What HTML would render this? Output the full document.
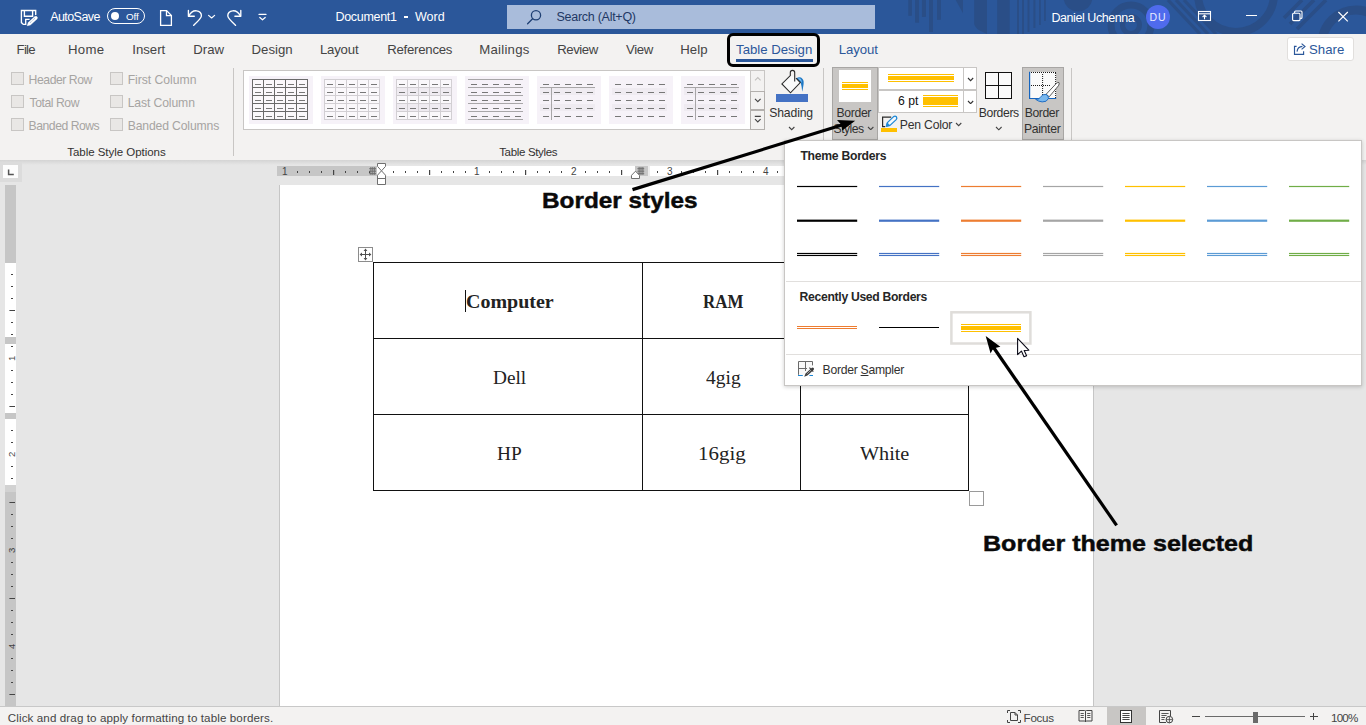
<!DOCTYPE html>
<html>
<head>
<meta charset="utf-8">
<title>Document1 - Word</title>
<style>
*{box-sizing:border-box;margin:0;padding:0}
html,body{width:1366px;height:725px;overflow:hidden;background:#e6e6e6;font-family:"Liberation Sans",sans-serif}
.abs{position:absolute}
.t{position:absolute;white-space:nowrap;line-height:1}
.cb{position:absolute;width:13px;height:13px;border:1px solid #c8c6c4;background:#e9e7e5}
.vsep{position:absolute;width:1px;background:#c8c6c4}
#titlebar{position:absolute;left:0;top:0;width:1366px;height:33.5px;background:#2b579a}
#tabs{position:absolute;left:0;top:33.5px;width:1366px;height:33px;background:#f3f2f1}
#ribbon{position:absolute;left:0;top:66px;width:1366px;height:94px;background:#f3f2f1}
#page{position:absolute;left:278.5px;top:184.5px;width:815.5px;height:522px;background:#fff;border-left:1px solid #c6c6c6;border-right:1px solid #c6c6c6}
#status{position:absolute;left:0;top:706px;width:1366px;height:19px;background:#f3f2f1;border-top:1px solid #c8c8c8}
#menu{position:absolute;left:784px;top:140px;width:578px;height:246px;background:#fff;border:1px solid #c8c6c4;box-shadow:0 1px 4px rgba(0,0,0,.2)}
</style>
</head>
<body>
<div id="page"></div>
<div class="abs" style="left:0;top:160px;width:1366px;height:5px;background:linear-gradient(#d4d4d4,#e6e6e6)"></div>
<div class="abs" style="left:0;top:162px;width:22px;height:20px;background:#dcdcdc"></div>
<div class="abs" style="left:3.4px;top:165px;width:15px;height:13px;background:#fdfdfd"></div>
<svg class="abs" style="left:7px;top:168px" width="8" height="9" viewBox="0 0 8 9"><path d="M1.6 1.6 V6.6 H6.8" fill="none" stroke="#555" stroke-width="1.5"/></svg>
<div class="abs" style="left:277px;top:166px;width:520px;height:10px;background:#fff"></div>
<div class="abs" style="left:277px;top:166px;width:100px;height:10px;background:#c6c6c6"></div>
<div class="abs" style="left:635px;top:166px;width:13px;height:10px;background:#c6c6c6"></div>
<div class="abs" style="left:648px;top:166px;width:2px;height:10px;background:#ececec"></div>
<svg class="abs" style="left:277px;top:162px" width="520" height="24" viewBox="277 162 520 24"><rect x="297.0" y="171" width="1" height="2" fill="#444"/><rect x="309.0" y="171" width="1" height="2" fill="#444"/><rect x="321.0" y="171" width="1" height="2" fill="#444"/><rect x="333.0" y="170" width="1.2" height="5" fill="#444"/><rect x="345.0" y="171" width="1" height="2" fill="#444"/><rect x="357.0" y="171" width="1" height="2" fill="#444"/><rect x="369.0" y="171" width="1" height="2" fill="#444"/><rect x="393.0" y="171" width="1" height="2" fill="#444"/><rect x="405.0" y="171" width="1" height="2" fill="#444"/><rect x="417.0" y="171" width="1" height="2" fill="#444"/><rect x="429.0" y="170" width="1.2" height="5" fill="#444"/><rect x="441.0" y="171" width="1" height="2" fill="#444"/><rect x="453.0" y="171" width="1" height="2" fill="#444"/><rect x="465.0" y="171" width="1" height="2" fill="#444"/><rect x="489.0" y="171" width="1" height="2" fill="#444"/><rect x="501.0" y="171" width="1" height="2" fill="#444"/><rect x="513.0" y="171" width="1" height="2" fill="#444"/><rect x="525.0" y="170" width="1.2" height="5" fill="#444"/><rect x="537.0" y="171" width="1" height="2" fill="#444"/><rect x="549.0" y="171" width="1" height="2" fill="#444"/><rect x="561.0" y="171" width="1" height="2" fill="#444"/><rect x="585.0" y="171" width="1" height="2" fill="#444"/><rect x="597.0" y="171" width="1" height="2" fill="#444"/><rect x="609.0" y="171" width="1" height="2" fill="#444"/><rect x="621.0" y="170" width="1.2" height="5" fill="#444"/><rect x="657.0" y="171" width="1" height="2" fill="#444"/><rect x="681.0" y="171" width="1" height="2" fill="#444"/><rect x="693.0" y="171" width="1" height="2" fill="#444"/><rect x="705.0" y="171" width="1" height="2" fill="#444"/><rect x="717.0" y="170" width="1.2" height="5" fill="#444"/><rect x="729.0" y="171" width="1" height="2" fill="#444"/><rect x="741.0" y="171" width="1" height="2" fill="#444"/><rect x="753.0" y="171" width="1" height="2" fill="#444"/><rect x="777.0" y="171" width="1" height="2" fill="#444"/><rect x="370.4" y="167" width="1" height="7.8" fill="#6e6e6e"/><rect x="372.3" y="167" width="1" height="7.8" fill="#6e6e6e"/><rect x="374.2" y="167" width="1" height="7.8" fill="#6e6e6e"/><rect x="369.2" y="168.2" width="6.8" height="1" fill="#6e6e6e"/><rect x="369.2" y="170.7" width="6.8" height="1" fill="#6e6e6e"/><rect x="369.2" y="173.2" width="6.8" height="1" fill="#6e6e6e"/><rect x="638.6" y="167" width="1" height="7.8" fill="#6e6e6e"/><rect x="640.5" y="167" width="1" height="7.8" fill="#6e6e6e"/><rect x="642.4" y="167" width="1" height="7.8" fill="#6e6e6e"/><rect x="637.4" y="168.2" width="6.8" height="1" fill="#6e6e6e"/><rect x="637.4" y="170.7" width="6.8" height="1" fill="#6e6e6e"/><rect x="637.4" y="173.2" width="6.8" height="1" fill="#6e6e6e"/><path d="M377.5 163.5 H385.5 V166.4 L381.5 170.8 L377.5 166.4 Z" fill="#fff" stroke="#6f6f6f" stroke-width="1"/><path d="M381.5 170.8 L385.5 175.2 V184.5 H377.5 V175.2 Z" fill="#fff" stroke="#6f6f6f" stroke-width="1"/><path d="M377.5 178.5 H385.5" fill="none" stroke="#6f6f6f" stroke-width="1"/><path d="M631.5 178.5 V175.3 L635.5 171.2 L639.5 175.3 V178.5 Z" fill="#fff" stroke="#6f6f6f" stroke-width="1"/></svg>
<div class="t" style="left:281.9px;top:167px;font-size:10px;color:#444;letter-spacing:0.60px;">1</div>
<div class="t" style="left:474.1px;top:167px;font-size:10px;color:#444;letter-spacing:0.60px;">1</div>
<div class="t" style="left:571.0px;top:167px;font-size:10px;color:#444;letter-spacing:-0.40px;">2</div>
<div class="t" style="left:667.0px;top:167px;font-size:10px;color:#444;letter-spacing:-0.40px;">3</div>
<div class="t" style="left:763.0px;top:167px;font-size:10px;color:#444;letter-spacing:-1.20px;">4</div>
<div class="abs" style="left:5px;top:185px;width:11px;height:521px;background:#c6c6c6"></div>
<div class="abs" style="left:5px;top:263px;width:11px;height:74px;background:#fff"></div>
<div class="abs" style="left:5px;top:344px;width:11px;height:69px;background:#fff"></div>
<div class="abs" style="left:5px;top:419px;width:11px;height:66px;background:#fff"></div>
<div class="abs" style="left:5px;top:485px;width:11px;height:7px;background:#d2d2d2"></div>
<svg class="abs" style="left:5px;top:185px" width="11" height="521" viewBox="5 185 11 521"><rect x="11" y="274.0" width="2" height="1" fill="#444"/><rect x="11" y="286.0" width="2" height="1" fill="#444"/><rect x="11" y="298.0" width="2" height="1" fill="#444"/><rect x="9.4" y="310.0" width="5.6" height="1" fill="#444"/><rect x="11" y="322.0" width="2" height="1" fill="#444"/><rect x="11" y="334.0" width="2" height="1" fill="#444"/><rect x="11" y="346.0" width="2" height="1" fill="#444"/><text x="0" y="0" transform="translate(15 358.4) rotate(-90)" font-family="Liberation Sans" font-size="9.6" fill="#444" text-anchor="middle">1</text><rect x="11" y="370.0" width="2" height="1" fill="#444"/><rect x="11" y="382.0" width="2" height="1" fill="#444"/><rect x="11" y="394.0" width="2" height="1" fill="#444"/><rect x="9.4" y="406.0" width="5.6" height="1" fill="#444"/><rect x="11" y="430.0" width="2" height="1" fill="#444"/><rect x="11" y="442.0" width="2" height="1" fill="#444"/><text x="0" y="0" transform="translate(15 454.4) rotate(-90)" font-family="Liberation Sans" font-size="9.6" fill="#444" text-anchor="middle">2</text><rect x="11" y="466.0" width="2" height="1" fill="#444"/><rect x="11" y="478.0" width="2" height="1" fill="#444"/><rect x="9.4" y="502.0" width="5.6" height="1" fill="#444"/><rect x="11" y="514.0" width="2" height="1" fill="#444"/><rect x="11" y="526.0" width="2" height="1" fill="#444"/><rect x="11" y="538.0" width="2" height="1" fill="#444"/><text x="0" y="0" transform="translate(15 550.4) rotate(-90)" font-family="Liberation Sans" font-size="9.6" fill="#444" text-anchor="middle">3</text><rect x="11" y="562.0" width="2" height="1" fill="#444"/><rect x="11" y="574.0" width="2" height="1" fill="#444"/><rect x="11" y="586.0" width="2" height="1" fill="#444"/><rect x="9.4" y="598.0" width="5.6" height="1" fill="#444"/><rect x="11" y="610.0" width="2" height="1" fill="#444"/><rect x="11" y="622.0" width="2" height="1" fill="#444"/><rect x="11" y="634.0" width="2" height="1" fill="#444"/><text x="0" y="0" transform="translate(15 646.4) rotate(-90)" font-family="Liberation Sans" font-size="9.6" fill="#444" text-anchor="middle">4</text><rect x="11" y="658.0" width="2" height="1" fill="#444"/><rect x="11" y="670.0" width="2" height="1" fill="#444"/><rect x="11" y="682.0" width="2" height="1" fill="#444"/><rect x="9.4" y="694.0" width="5.6" height="1" fill="#444"/></svg>
<div class="abs" style="left:373px;top:262px;width:1.3px;height:229px;background:#111"></div>
<div class="abs" style="left:642px;top:262px;width:1.3px;height:229px;background:#111"></div>
<div class="abs" style="left:800px;top:262px;width:1.3px;height:229px;background:#111"></div>
<div class="abs" style="left:968px;top:262px;width:1.3px;height:229px;background:#111"></div>
<div class="abs" style="left:373px;top:262px;width:596px;height:1.3px;background:#111"></div>
<div class="abs" style="left:373px;top:338px;width:596px;height:1.3px;background:#111"></div>
<div class="abs" style="left:373px;top:414px;width:596px;height:1.3px;background:#111"></div>
<div class="abs" style="left:373px;top:490px;width:596px;height:1.3px;background:#111"></div>
<div class="t" style="left:465.5px;top:293px;font-size:18.7px;color:#222;transform:scaleX(1.0691);transform-origin:0 0;font-family:'Liberation Serif',serif;font-weight:bold;">Computer</div>
<div class="t" style="left:702.6px;top:293px;font-size:18.7px;color:#222;transform:scaleX(0.9045);transform-origin:0 0;font-family:'Liberation Serif',serif;font-weight:bold;">RAM</div>
<div class="abs" style="left:465px;top:290px;width:1.2px;height:22px;background:#111"></div>
<div class="t" style="left:492.6px;top:369px;font-size:18.7px;color:#222;transform:scaleX(1.0323);transform-origin:0 0;font-family:'Liberation Serif',serif;">Dell</div>
<div class="t" style="left:705.8px;top:369px;font-size:18.7px;color:#222;transform:scaleX(1.0424);transform-origin:0 0;font-family:'Liberation Serif',serif;">4gig</div>
<div class="t" style="left:497.2px;top:445px;font-size:18.7px;color:#222;transform:scaleX(1.0364);transform-origin:0 0;font-family:'Liberation Serif',serif;">HP</div>
<div class="t" style="left:698.4px;top:445px;font-size:18.7px;color:#222;transform:scaleX(1.1200);transform-origin:0 0;font-family:'Liberation Serif',serif;">16gig</div>
<div class="t" style="left:860.4px;top:445px;font-size:18.7px;color:#222;transform:scaleX(1.0800);transform-origin:0 0;font-family:'Liberation Serif',serif;">White</div>
<svg class="abs" style="left:358px;top:247px" width="16" height="16" viewBox="358 247 16 16">
<rect x="358.5" y="247.5" width="14" height="14" fill="#fff" stroke="#8c8c8c" stroke-width="1"/>
<path d="M365.5 249.5 V259.5 M360.5 254.5 H370.5" stroke="#505050" stroke-width="1" fill="none"/>
<path d="M365.5 248.6 L367.4 251 H363.6 Z M365.5 260.4 L367.4 258 H363.6 Z M359.6 254.5 L362 252.6 V256.4 Z M371.4 254.5 L369 252.6 V256.4 Z" fill="#505050"/></svg>
<div class="abs" style="left:969px;top:491px;width:15px;height:15px;background:#fff;border:1px solid #9a9a9a"></div>
<div id="titlebar"></div>
<svg class="abs" style="left:870px;top:0" width="496" height="33.5" viewBox="870 0 496 33.5">
<g fill="#2a4e87">
<rect x="908.3" y="0" width="3.6" height="15.8"/><rect x="915.1" y="0" width="4" height="22.7"/><rect x="921.9" y="0" width="4" height="16.9"/><rect x="929" y="0" width="4" height="31.9"/><rect x="937" y="0" width="3.9" height="19.8"/>
<path d="M955.7 0 H963 V13.2 Z"/>
<path d="M974.2 0 H987 V34 L984 32.6 Q975 29 974.2 24 Z"/>
<rect x="997.2" y="0" width="12.5" height="34"/>
<rect x="1017" y="0" width="2" height="34"/><rect x="1022" y="0" width="2" height="34"/><rect x="1027.5" y="0" width="2" height="32"/><rect x="1033.4" y="0" width="2" height="28"/><rect x="1039" y="0" width="1.8" height="25"/><rect x="1044" y="0" width="1.8" height="21"/>
<circle cx="1078" cy="-3" r="14.5"/>
</g>
<g fill="none" stroke="#2a4e87">
<circle cx="1131" cy="25" r="20" stroke-width="7"/>
<circle cx="1131" cy="25" r="8.5" stroke-width="5"/>
<path d="M1168 0 L1200 34 M1176 0 L1208 34 M1184 0 L1216 34" stroke-width="3.2"/>
<circle cx="1236" cy="-6" r="38" stroke-width="8"/>
<path d="M1284 18 L1302 0 M1290 24 L1314 0 M1297 29 L1326 0" stroke-width="3.6"/>
<circle cx="1356" cy="44" r="34" stroke-width="9"/>
</g></svg>
<svg class="abs" style="left:19px;top:8px" width="22" height="20" viewBox="19 8 22 20" fill="none" stroke="#fff" stroke-width="1.35" stroke-linejoin="miter" stroke-linecap="butt">
<path d="M35.7 15 V10.5 H21.4 V22.6 L23.3 24.4 H25.7 V19.4 H29.6"/><path d="M24.4 10.5 V16.2 H32.6 V10.5"/>
<path d="M27.2 25.7 L28.3 22.5 L34.9 16.5 Q36 15.7 37 16.8 Q37.9 17.9 37 18.9 L30.4 24.9 Z" fill="#fff" stroke="#fff" stroke-width="0.5" stroke-linejoin="round"/>
<path d="M30.2 22.6 L35.6 17.7" stroke="#2b579a" stroke-width="0.55" stroke-dasharray="1 0.8"/></svg>
<div class="t" style="left:50.2px;top:11px;font-size:12.5px;color:#fff;letter-spacing:-0.57px;">AutoSave</div>
<div class="abs" style="left:107px;top:8px;width:38px;height:16px;border:1.3px solid #fff;border-radius:8px"></div>
<div class="abs" style="left:110.7px;top:12.4px;width:8px;height:8px;border-radius:4px;background:#fff"></div>
<div class="t" style="left:126.0px;top:12px;font-size:9.8px;color:#fff;letter-spacing:-0.10px;">Off</div>
<svg class="abs" style="left:158px;top:8px" width="16" height="20" viewBox="158 8 16 20" fill="none" stroke="#fff" stroke-width="1.3" stroke-linejoin="miter">
<path d="M160.6 10.6 H166.6 L171.4 15.6 V25.3 H160.6 Z"/><path d="M166.5 10.8 V15.7 H171.2"/></svg>
<svg class="abs" style="left:185px;top:8px" width="32" height="20" viewBox="185 8 32 20" fill="none" stroke="#fff" stroke-width="1.35" stroke-linecap="round" stroke-linejoin="round">
<path d="M188.4 10.4 V16.3 H194.3"/><path d="M188.8 16 C190.5 12.5 193.5 10.6 196.5 10.8 C199.8 11 201.6 13.4 201.4 16 C201.2 18.3 199.5 19.8 193.6 25.4"/>
<path d="M208.6 15.4 L211.6 18 L214.6 15.4" stroke-width="1.2"/></svg>
<svg class="abs" style="left:224px;top:8px" width="20" height="20" viewBox="224 8 20 20" fill="none" stroke="#fff" stroke-width="1.35" stroke-linecap="round" stroke-linejoin="round">
<path d="M240.8 10.4 V16.3 H234.9"/><path d="M240.4 16 C238.7 12.5 235.7 10.6 232.7 10.8 C229.4 11 227.6 13.4 227.8 16 C228 18.3 229.7 19.8 235.6 25.4"/></svg>
<svg class="abs" style="left:256px;top:10px" width="12" height="12" viewBox="256 10 12 12" fill="none" stroke="#fff" stroke-width="1.2" stroke-linecap="round" stroke-linejoin="round">
<path d="M259 14.4 H266"/><path d="M259.8 17.5 L262.5 19.8 L265.2 17.5"/></svg>
<div class="t" style="left:335.5px;top:11px;font-size:12.5px;color:#fff;letter-spacing:-0.31px;">Document1</div>
<div class="abs" style="left:403.6px;top:16.4px;width:4.4px;height:1.2px;background:#fff"></div>
<div class="t" style="left:415.0px;top:11px;font-size:12.5px;color:#fff;letter-spacing:0.00px;">Word</div>
<div class="abs" style="left:507px;top:5px;width:368px;height:24px;background:#a9bcdb"></div>
<svg class="abs" style="left:525px;top:8px" width="18" height="18" viewBox="525 8 18 18" fill="none" stroke="#1f3f73" stroke-width="1.3" stroke-linecap="round">
<circle cx="536" cy="15.2" r="4.6"/><path d="M532.6 18.8 L527.6 23.8"/></svg>
<div class="t" style="left:556.5px;top:11px;font-size:12.5px;color:#1f3864;letter-spacing:-0.27px;">Search (Alt+Q)</div>
<div class="t" style="left:1051.4px;top:12px;font-size:12.5px;color:#fff;letter-spacing:-0.43px;">Daniel Uchenna</div>
<div class="abs" style="left:1146px;top:5px;width:24px;height:24px;border-radius:12px;background:#4f6bed"></div>
<div class="t" style="left:1149.6px;top:12px;font-size:10.5px;color:#e8ecff;letter-spacing:0.80px;">DU</div>
<svg class="abs" style="left:1196px;top:9px" width="18" height="14" viewBox="1196 9 18 14" fill="none" stroke="#fff" stroke-width="1.1" stroke-linejoin="miter">
<rect x="1198.5" y="11.5" width="12" height="9"/><path d="M1198.5 13.8 H1210.5"/><path d="M1204.5 19.3 V15.4 M1202.6 17 L1204.5 15.2 L1206.4 17"/></svg>
<div class="abs" style="left:1246px;top:15px;width:10.5px;height:1.2px;background:#fff"></div>
<svg class="abs" style="left:1290px;top:9px" width="14" height="14" viewBox="1290 9 14 14" fill="none" stroke="#fff" stroke-width="1.1">
<rect x="1292.6" y="13.2" width="7.4" height="7.4" rx="1"/><path d="M1294.6 13 V12 Q1294.6 11 1295.6 11 H1301 Q1302 11 1302 12 V17.4 Q1302 18.4 1301 18.4 H1300.2"/></svg>
<svg class="abs" style="left:1336px;top:10px" width="14" height="14" viewBox="1336 10 14 14" fill="none" stroke="#fff" stroke-width="1.15">
<path d="M1338.4 12 L1347.8 21.4 M1347.8 12 L1338.4 21.4"/></svg>
<div id="tabs"></div>
<div id="ribbon"></div>
<div class="t" style="left:16.6px;top:43px;font-size:13.2px;color:#444;letter-spacing:-0.73px;">File</div>
<div class="t" style="left:68.0px;top:43px;font-size:13.2px;color:#444;letter-spacing:0.27px;">Home</div>
<div class="t" style="left:132.3px;top:43px;font-size:13.2px;color:#444;letter-spacing:-0.02px;">Insert</div>
<div class="t" style="left:193.3px;top:43px;font-size:13.2px;color:#444;letter-spacing:0.00px;">Draw</div>
<div class="t" style="left:251.5px;top:43px;font-size:13.2px;color:#444;letter-spacing:0.02px;">Design</div>
<div class="t" style="left:319.9px;top:43px;font-size:13.2px;color:#444;letter-spacing:-0.18px;">Layout</div>
<div class="t" style="left:387.2px;top:43px;font-size:13.2px;color:#444;letter-spacing:-0.24px;">References</div>
<div class="t" style="left:479.2px;top:43px;font-size:13.2px;color:#444;letter-spacing:0.26px;">Mailings</div>
<div class="t" style="left:557.3px;top:43px;font-size:13.2px;color:#444;letter-spacing:-0.46px;">Review</div>
<div class="t" style="left:626.0px;top:43px;font-size:13.2px;color:#444;letter-spacing:-0.33px;">View</div>
<div class="t" style="left:680.2px;top:43px;font-size:13.2px;color:#444;letter-spacing:0.13px;">Help</div>
<div class="t" style="left:736.1px;top:43px;font-size:13.2px;color:#2b579a;letter-spacing:-0.01px;">Table Design</div>
<div class="abs" style="left:736px;top:59px;width:77px;height:3px;background:#2b579a"></div>
<div class="t" style="left:838.8px;top:43px;font-size:13.2px;color:#2b579a;letter-spacing:-0.12px;">Layout</div>
<div class="abs" style="left:727px;top:33px;width:93px;height:34px;border:3px solid #000;border-radius:6px"></div>
<div class="abs" style="left:1287px;top:37px;width:66.5px;height:23.5px;background:#fff;border:1px solid #e1dfdd;border-radius:3px"></div>
<svg class="abs" style="left:1292px;top:41px" width="16" height="16" viewBox="1292 41 16 16" fill="none" stroke="#2b579a" stroke-width="1.15" stroke-linejoin="miter">
<path d="M1296.6 46.4 H1294.5 V54.4 H1303.6 V51.2"/><path d="M1297 51.6 C1297.4 48.6 1299.2 46.6 1302.4 46.4 M1301.6 43.6 L1305 46.5 L1301.6 49.4"/></svg>
<div class="t" style="left:1309.0px;top:43px;font-size:13.2px;color:#2b579a;letter-spacing:0.05px;">Share</div>
<div class="cb" style="left:11px;top:72px"></div>
<div class="cb" style="left:110px;top:72px"></div>
<div class="t" style="left:28.6px;top:74px;font-size:12.2px;color:#a6a4a2;letter-spacing:-0.44px;">Header Row</div>
<div class="t" style="left:127.7px;top:74px;font-size:12.2px;color:#a6a4a2;letter-spacing:-0.03px;">First Column</div>
<div class="cb" style="left:11px;top:95px"></div>
<div class="cb" style="left:110px;top:95px"></div>
<div class="t" style="left:29.6px;top:97px;font-size:12.2px;color:#a6a4a2;letter-spacing:-0.45px;">Total Row</div>
<div class="t" style="left:127.7px;top:97px;font-size:12.2px;color:#a6a4a2;letter-spacing:-0.12px;">Last Column</div>
<div class="cb" style="left:11px;top:118px"></div>
<div class="cb" style="left:110px;top:118px"></div>
<div class="t" style="left:28.6px;top:120px;font-size:12.2px;color:#a6a4a2;letter-spacing:-0.48px;">Banded Rows</div>
<div class="t" style="left:127.7px;top:120px;font-size:12.2px;color:#a6a4a2;letter-spacing:-0.15px;">Banded Columns</div>
<div class="t" style="left:67.3px;top:147px;font-size:11.5px;color:#323130;letter-spacing:-0.04px;">Table Style Options</div>
<div class="vsep" style="left:233px;top:68px;height:88px"></div>
<div class="abs" style="left:243px;top:70px;width:522px;height:60px;background:#fff;border:1px solid #c8c6c4"></div>
<svg class="abs" style="left:249px;top:76px" width="64" height="48" viewBox="0 0 64 48" shape-rendering="crispEdges"><rect width="64" height="48" fill="#f6f2f8"/><rect x="3" y="3" width="56" height="41" fill="#faf8fb"/><rect x="3" y="3" width="1" height="41" fill="#6a6a6a"/><rect x="3" y="3" width="56" height="1" fill="#6a6a6a"/><rect x="14" y="3" width="1" height="41" fill="#6a6a6a"/><rect x="3" y="11" width="56" height="1" fill="#6a6a6a"/><rect x="25" y="3" width="1" height="41" fill="#6a6a6a"/><rect x="3" y="19" width="56" height="1" fill="#6a6a6a"/><rect x="36" y="3" width="1" height="41" fill="#6a6a6a"/><rect x="3" y="27" width="56" height="1" fill="#6a6a6a"/><rect x="47" y="3" width="1" height="41" fill="#6a6a6a"/><rect x="3" y="35" width="56" height="1" fill="#6a6a6a"/><rect x="58" y="3" width="1" height="41" fill="#6a6a6a"/><rect x="3" y="43" width="56" height="1" fill="#6a6a6a"/><rect x="6" y="8" width="6" height="1" fill="#777"/><rect x="17" y="8" width="6" height="1" fill="#777"/><rect x="28" y="8" width="6" height="1" fill="#777"/><rect x="39" y="8" width="6" height="1" fill="#777"/><rect x="50" y="8" width="6" height="1" fill="#777"/><rect x="6" y="16" width="6" height="1" fill="#777"/><rect x="17" y="16" width="6" height="1" fill="#777"/><rect x="28" y="16" width="6" height="1" fill="#777"/><rect x="39" y="16" width="6" height="1" fill="#777"/><rect x="50" y="16" width="6" height="1" fill="#777"/><rect x="6" y="24" width="6" height="1" fill="#777"/><rect x="17" y="24" width="6" height="1" fill="#777"/><rect x="28" y="24" width="6" height="1" fill="#777"/><rect x="39" y="24" width="6" height="1" fill="#777"/><rect x="50" y="24" width="6" height="1" fill="#777"/><rect x="6" y="32" width="6" height="1" fill="#777"/><rect x="17" y="32" width="6" height="1" fill="#777"/><rect x="28" y="32" width="6" height="1" fill="#777"/><rect x="39" y="32" width="6" height="1" fill="#777"/><rect x="50" y="32" width="6" height="1" fill="#777"/><rect x="6" y="40" width="6" height="1" fill="#777"/><rect x="17" y="40" width="6" height="1" fill="#777"/><rect x="28" y="40" width="6" height="1" fill="#777"/><rect x="39" y="40" width="6" height="1" fill="#777"/><rect x="50" y="40" width="6" height="1" fill="#777"/></svg>
<svg class="abs" style="left:321px;top:76px" width="64" height="48" viewBox="0 0 64 48" shape-rendering="crispEdges"><rect width="64" height="48" fill="#f6f2f8"/><rect x="3" y="3" width="56" height="41" fill="#faf8fb"/><rect x="3" y="3" width="1" height="41" fill="#d2cfd3"/><rect x="3" y="3" width="56" height="1" fill="#d2cfd3"/><rect x="14" y="3" width="1" height="41" fill="#d2cfd3"/><rect x="3" y="11" width="56" height="1" fill="#d2cfd3"/><rect x="25" y="3" width="1" height="41" fill="#d2cfd3"/><rect x="3" y="19" width="56" height="1" fill="#d2cfd3"/><rect x="36" y="3" width="1" height="41" fill="#d2cfd3"/><rect x="3" y="27" width="56" height="1" fill="#d2cfd3"/><rect x="47" y="3" width="1" height="41" fill="#d2cfd3"/><rect x="3" y="35" width="56" height="1" fill="#d2cfd3"/><rect x="58" y="3" width="1" height="41" fill="#d2cfd3"/><rect x="3" y="43" width="56" height="1" fill="#d2cfd3"/><rect x="6" y="8" width="6" height="1" fill="#777"/><rect x="17" y="8" width="6" height="1" fill="#777"/><rect x="28" y="8" width="6" height="1" fill="#777"/><rect x="39" y="8" width="6" height="1" fill="#777"/><rect x="50" y="8" width="6" height="1" fill="#777"/><rect x="6" y="16" width="6" height="1" fill="#777"/><rect x="17" y="16" width="6" height="1" fill="#777"/><rect x="28" y="16" width="6" height="1" fill="#777"/><rect x="39" y="16" width="6" height="1" fill="#777"/><rect x="50" y="16" width="6" height="1" fill="#777"/><rect x="6" y="24" width="6" height="1" fill="#777"/><rect x="17" y="24" width="6" height="1" fill="#777"/><rect x="28" y="24" width="6" height="1" fill="#777"/><rect x="39" y="24" width="6" height="1" fill="#777"/><rect x="50" y="24" width="6" height="1" fill="#777"/><rect x="6" y="32" width="6" height="1" fill="#777"/><rect x="17" y="32" width="6" height="1" fill="#777"/><rect x="28" y="32" width="6" height="1" fill="#777"/><rect x="39" y="32" width="6" height="1" fill="#777"/><rect x="50" y="32" width="6" height="1" fill="#777"/><rect x="6" y="40" width="6" height="1" fill="#777"/><rect x="17" y="40" width="6" height="1" fill="#777"/><rect x="28" y="40" width="6" height="1" fill="#777"/><rect x="39" y="40" width="6" height="1" fill="#777"/><rect x="50" y="40" width="6" height="1" fill="#777"/></svg>
<svg class="abs" style="left:393px;top:76px" width="64" height="48" viewBox="0 0 64 48" shape-rendering="crispEdges"><rect width="64" height="48" fill="#f6f2f8"/><rect x="3" y="3" width="56" height="41" fill="#faf8fb"/><rect x="3" y="11" width="56" height="9" fill="#efebf1"/><rect x="3" y="27" width="56" height="9" fill="#efebf1"/><rect x="3" y="3" width="1" height="41" fill="#d2cfd3"/><rect x="3" y="3" width="56" height="1" fill="#d2cfd3"/><rect x="14" y="3" width="1" height="41" fill="#d2cfd3"/><rect x="3" y="11" width="56" height="1" fill="#d2cfd3"/><rect x="25" y="3" width="1" height="41" fill="#d2cfd3"/><rect x="3" y="19" width="56" height="1" fill="#d2cfd3"/><rect x="36" y="3" width="1" height="41" fill="#d2cfd3"/><rect x="3" y="27" width="56" height="1" fill="#d2cfd3"/><rect x="47" y="3" width="1" height="41" fill="#d2cfd3"/><rect x="3" y="35" width="56" height="1" fill="#d2cfd3"/><rect x="58" y="3" width="1" height="41" fill="#d2cfd3"/><rect x="3" y="43" width="56" height="1" fill="#d2cfd3"/><rect x="6" y="8" width="6" height="1" fill="#777"/><rect x="17" y="8" width="6" height="1" fill="#777"/><rect x="28" y="8" width="6" height="1" fill="#777"/><rect x="39" y="8" width="6" height="1" fill="#777"/><rect x="50" y="8" width="6" height="1" fill="#777"/><rect x="6" y="16" width="6" height="1" fill="#777"/><rect x="17" y="16" width="6" height="1" fill="#777"/><rect x="28" y="16" width="6" height="1" fill="#777"/><rect x="39" y="16" width="6" height="1" fill="#777"/><rect x="50" y="16" width="6" height="1" fill="#777"/><rect x="6" y="24" width="6" height="1" fill="#777"/><rect x="17" y="24" width="6" height="1" fill="#777"/><rect x="28" y="24" width="6" height="1" fill="#777"/><rect x="39" y="24" width="6" height="1" fill="#777"/><rect x="50" y="24" width="6" height="1" fill="#777"/><rect x="6" y="32" width="6" height="1" fill="#777"/><rect x="17" y="32" width="6" height="1" fill="#777"/><rect x="28" y="32" width="6" height="1" fill="#777"/><rect x="39" y="32" width="6" height="1" fill="#777"/><rect x="50" y="32" width="6" height="1" fill="#777"/><rect x="6" y="40" width="6" height="1" fill="#777"/><rect x="17" y="40" width="6" height="1" fill="#777"/><rect x="28" y="40" width="6" height="1" fill="#777"/><rect x="39" y="40" width="6" height="1" fill="#777"/><rect x="50" y="40" width="6" height="1" fill="#777"/></svg>
<svg class="abs" style="left:465px;top:76px" width="64" height="48" viewBox="0 0 64 48" shape-rendering="crispEdges"><rect width="64" height="48" fill="#f6f2f8"/><rect x="3" y="3" width="55" height="1" fill="#a8a6a8"/><rect x="3" y="11" width="55" height="1" fill="#a8a6a8"/><rect x="3" y="19" width="55" height="1" fill="#a8a6a8"/><rect x="3" y="27" width="55" height="1" fill="#a8a6a8"/><rect x="3" y="35" width="55" height="1" fill="#a8a6a8"/><rect x="3" y="43" width="55" height="1" fill="#a8a6a8"/><rect x="6" y="8" width="6" height="1" fill="#777"/><rect x="17" y="8" width="6" height="1" fill="#777"/><rect x="28" y="8" width="6" height="1" fill="#777"/><rect x="39" y="8" width="6" height="1" fill="#777"/><rect x="50" y="8" width="6" height="1" fill="#777"/><rect x="6" y="16" width="6" height="1" fill="#777"/><rect x="17" y="16" width="6" height="1" fill="#777"/><rect x="28" y="16" width="6" height="1" fill="#777"/><rect x="39" y="16" width="6" height="1" fill="#777"/><rect x="50" y="16" width="6" height="1" fill="#777"/><rect x="6" y="24" width="6" height="1" fill="#777"/><rect x="17" y="24" width="6" height="1" fill="#777"/><rect x="28" y="24" width="6" height="1" fill="#777"/><rect x="39" y="24" width="6" height="1" fill="#777"/><rect x="50" y="24" width="6" height="1" fill="#777"/><rect x="6" y="32" width="6" height="1" fill="#777"/><rect x="17" y="32" width="6" height="1" fill="#777"/><rect x="28" y="32" width="6" height="1" fill="#777"/><rect x="39" y="32" width="6" height="1" fill="#777"/><rect x="50" y="32" width="6" height="1" fill="#777"/><rect x="6" y="40" width="6" height="1" fill="#777"/><rect x="17" y="40" width="6" height="1" fill="#777"/><rect x="28" y="40" width="6" height="1" fill="#777"/><rect x="39" y="40" width="6" height="1" fill="#777"/><rect x="50" y="40" width="6" height="1" fill="#777"/></svg>
<svg class="abs" style="left:537px;top:76px" width="64" height="48" viewBox="0 0 64 48" shape-rendering="crispEdges"><rect width="64" height="48" fill="#f6f2f8"/><rect x="3" y="12" width="55" height="7" fill="#efebf1"/><rect x="3" y="28" width="55" height="7" fill="#efebf1"/><rect x="3" y="11" width="55" height="1" fill="#a8a6a8"/><rect x="14" y="11" width="1" height="33" fill="#a8a6a8"/><rect x="6" y="8" width="6" height="1" fill="#777"/><rect x="17" y="8" width="6" height="1" fill="#777"/><rect x="28" y="8" width="6" height="1" fill="#777"/><rect x="39" y="8" width="6" height="1" fill="#777"/><rect x="50" y="8" width="6" height="1" fill="#777"/><rect x="6" y="16" width="6" height="1" fill="#777"/><rect x="17" y="16" width="6" height="1" fill="#777"/><rect x="28" y="16" width="6" height="1" fill="#777"/><rect x="39" y="16" width="6" height="1" fill="#777"/><rect x="50" y="16" width="6" height="1" fill="#777"/><rect x="6" y="24" width="6" height="1" fill="#777"/><rect x="17" y="24" width="6" height="1" fill="#777"/><rect x="28" y="24" width="6" height="1" fill="#777"/><rect x="39" y="24" width="6" height="1" fill="#777"/><rect x="50" y="24" width="6" height="1" fill="#777"/><rect x="6" y="32" width="6" height="1" fill="#777"/><rect x="17" y="32" width="6" height="1" fill="#777"/><rect x="28" y="32" width="6" height="1" fill="#777"/><rect x="39" y="32" width="6" height="1" fill="#777"/><rect x="50" y="32" width="6" height="1" fill="#777"/><rect x="6" y="40" width="6" height="1" fill="#777"/><rect x="17" y="40" width="6" height="1" fill="#777"/><rect x="28" y="40" width="6" height="1" fill="#777"/><rect x="39" y="40" width="6" height="1" fill="#777"/><rect x="50" y="40" width="6" height="1" fill="#777"/></svg>
<svg class="abs" style="left:609px;top:76px" width="64" height="48" viewBox="0 0 64 48" shape-rendering="crispEdges"><rect width="64" height="48" fill="#f6f2f8"/><rect x="3" y="12" width="55" height="7" fill="#efebf1"/><rect x="3" y="28" width="55" height="7" fill="#efebf1"/><rect x="6" y="8" width="6" height="1" fill="#777"/><rect x="17" y="8" width="6" height="1" fill="#777"/><rect x="28" y="8" width="6" height="1" fill="#777"/><rect x="39" y="8" width="6" height="1" fill="#777"/><rect x="50" y="8" width="6" height="1" fill="#777"/><rect x="6" y="16" width="6" height="1" fill="#777"/><rect x="17" y="16" width="6" height="1" fill="#777"/><rect x="28" y="16" width="6" height="1" fill="#777"/><rect x="39" y="16" width="6" height="1" fill="#777"/><rect x="50" y="16" width="6" height="1" fill="#777"/><rect x="6" y="24" width="6" height="1" fill="#777"/><rect x="17" y="24" width="6" height="1" fill="#777"/><rect x="28" y="24" width="6" height="1" fill="#777"/><rect x="39" y="24" width="6" height="1" fill="#777"/><rect x="50" y="24" width="6" height="1" fill="#777"/><rect x="6" y="32" width="6" height="1" fill="#777"/><rect x="17" y="32" width="6" height="1" fill="#777"/><rect x="28" y="32" width="6" height="1" fill="#777"/><rect x="39" y="32" width="6" height="1" fill="#777"/><rect x="50" y="32" width="6" height="1" fill="#777"/><rect x="6" y="40" width="6" height="1" fill="#777"/><rect x="17" y="40" width="6" height="1" fill="#777"/><rect x="28" y="40" width="6" height="1" fill="#777"/><rect x="39" y="40" width="6" height="1" fill="#777"/><rect x="50" y="40" width="6" height="1" fill="#777"/></svg>
<svg class="abs" style="left:681px;top:76px" width="64" height="48" viewBox="0 0 64 48" shape-rendering="crispEdges"><rect width="64" height="48" fill="#f6f2f8"/><rect x="3" y="12" width="55" height="7" fill="#efebf1"/><rect x="3" y="28" width="55" height="7" fill="#efebf1"/><rect x="3" y="11" width="55" height="1" fill="#a8a6a8"/><rect x="14" y="11" width="1" height="33" fill="#a8a6a8"/><rect x="6" y="8" width="6" height="1" fill="#777"/><rect x="17" y="8" width="6" height="1" fill="#777"/><rect x="28" y="8" width="6" height="1" fill="#777"/><rect x="39" y="8" width="6" height="1" fill="#777"/><rect x="50" y="8" width="6" height="1" fill="#777"/><rect x="6" y="16" width="6" height="1" fill="#777"/><rect x="17" y="16" width="6" height="1" fill="#777"/><rect x="28" y="16" width="6" height="1" fill="#777"/><rect x="39" y="16" width="6" height="1" fill="#777"/><rect x="50" y="16" width="6" height="1" fill="#777"/><rect x="6" y="24" width="6" height="1" fill="#777"/><rect x="17" y="24" width="6" height="1" fill="#777"/><rect x="28" y="24" width="6" height="1" fill="#777"/><rect x="39" y="24" width="6" height="1" fill="#777"/><rect x="50" y="24" width="6" height="1" fill="#777"/><rect x="6" y="32" width="6" height="1" fill="#777"/><rect x="17" y="32" width="6" height="1" fill="#777"/><rect x="28" y="32" width="6" height="1" fill="#777"/><rect x="39" y="32" width="6" height="1" fill="#777"/><rect x="50" y="32" width="6" height="1" fill="#777"/><rect x="6" y="40" width="6" height="1" fill="#777"/><rect x="17" y="40" width="6" height="1" fill="#777"/><rect x="28" y="40" width="6" height="1" fill="#777"/><rect x="39" y="40" width="6" height="1" fill="#777"/><rect x="50" y="40" width="6" height="1" fill="#777"/></svg>
<div class="abs" style="left:750px;top:71px;width:14px;height:20px;background:#f3f2f1;border-left:1px solid #c8c6c4"></div>
<div class="abs" style="left:750px;top:91px;width:15px;height:19px;background:#f3f2f1;border:1px solid #b3b0ad"></div>
<div class="abs" style="left:750px;top:110px;width:15px;height:20px;background:#f3f2f1;border:1px solid #b3b0ad"></div>
<svg class="abs" style="left:753px;top:75px" width="10" height="8" viewBox="0 0 10 8" fill="none" stroke="#c2c0be" stroke-width="1.1"><path d="M2 5.4 L4.8 2.6 L7.6 5.4"/></svg>
<svg class="abs" style="left:753px;top:96px" width="10" height="8" viewBox="0 0 10 8" fill="none" stroke="#444" stroke-width="1.1"><path d="M2 2.8 L4.8 5.6 L7.6 2.8"/></svg>
<svg class="abs" style="left:753px;top:113px" width="10" height="12" viewBox="0 0 10 12" fill="none" stroke="#444" stroke-width="1.1"><path d="M1.8 3.4 H7.8 M2 6.2 L4.8 9 L7.6 6.2"/></svg>
<div class="t" style="left:499.2px;top:147px;font-size:11.5px;color:#323130;letter-spacing:-0.33px;">Table Styles</div>
<svg class="abs" style="left:774px;top:68px" width="36" height="36" viewBox="774 68 36 36">
<path d="M781.9 83.9 L790.4 75.5 L795 77.4 L800.3 82.6 L790.5 92.8 Z" fill="#fafafa"/>
<path d="M796.4 78.6 Q798.6 76.4 801 77.6 Q804.2 79.6 803.6 84 Q803.2 87.6 802.2 91.8 Q801.8 86.6 800.8 83 Z" fill="#1e79c6"/>
<path d="M797.8 78.6 Q799.6 77.8 800.8 79 Q802 80.4 801.8 83 Q800.6 80.6 797.8 78.6 Z" fill="#7fbdf0"/>
<path d="M794.7 81.6 V72.6 Q794.7 70.4 792.5 70.4 Q790.3 70.4 790.3 72.6 V75.6 L781.9 83.9 L790.5 92.8 L800.3 82.6 L796 78.2" fill="none" stroke="#2b2b2b" stroke-width="1.1" stroke-linejoin="miter"/>
<rect x="776" y="94" width="32" height="8" fill="#4472c4"/></svg>
<div class="t" style="left:769.2px;top:107px;font-size:12.2px;color:#323130;letter-spacing:-0.13px;">Shading</div>
<svg class="abs" style="left:787.7px;top:126.0px" width="7.4" height="4.7" viewBox="-1 -1 7.4 4.7" fill="none" stroke="#444" stroke-width="1.1" stroke-linecap="butt" stroke-linejoin="miter"><path d="M0 0 L2.70 2.70 L5.40 0"/></svg>
<div class="vsep" style="left:823px;top:68px;height:89px"></div>
<div class="abs" style="left:832px;top:67px;width:46px;height:73px;background:#c8c6c4;border:1px solid #a8a6a4"></div>
<div class="abs" style="left:839px;top:70px;width:32px;height:32px;background:#fff"></div>
<div class="abs" style="left:842px;top:82px;width:26px;height:1px;background:#ffc000"></div>
<div class="abs" style="left:842px;top:84px;width:26px;height:4px;background:#ffc000"></div>
<div class="abs" style="left:842px;top:89px;width:26px;height:1px;background:#ffc000"></div>
<div class="t" style="left:836.6px;top:107px;font-size:12.2px;color:#323130;letter-spacing:-0.36px;">Border</div>
<div class="t" style="left:833.6px;top:123px;font-size:12.2px;color:#323130;letter-spacing:-0.56px;">Styles</div>
<svg class="abs" style="left:867.0px;top:125.6px" width="7.4" height="4.7" viewBox="-1 -1 7.4 4.7" fill="none" stroke="#444" stroke-width="1.1" stroke-linecap="butt" stroke-linejoin="miter"><path d="M0 0 L2.70 2.70 L5.40 0"/></svg>
<div class="abs" style="left:878px;top:67px;width:99px;height:23px;background:#fff;border:1px solid #c8c6c4"></div>
<div class="abs" style="left:878px;top:90px;width:99px;height:23px;background:#fff;border:1px solid #c8c6c4"></div>
<div class="abs" style="left:963px;top:68px;width:1px;height:21px;background:#c8c6c4"></div>
<div class="abs" style="left:963px;top:91px;width:1px;height:21px;background:#c8c6c4"></div>
<div class="abs" style="left:888px;top:74px;width:66px;height:1px;background:#ffc000"></div>
<div class="abs" style="left:888px;top:76px;width:66px;height:4px;background:#ffc000"></div>
<div class="abs" style="left:888px;top:81px;width:66px;height:1px;background:#ffc000"></div>
<svg class="abs" style="left:966.6px;top:77.0px" width="7.2" height="4.7" viewBox="-1 -1 7.2 4.7" fill="none" stroke="#333" stroke-width="1.1" stroke-linecap="butt" stroke-linejoin="miter"><path d="M0 0 L2.60 2.70 L5.20 0"/></svg>
<svg class="abs" style="left:966.6px;top:99.8px" width="7.2" height="4.7" viewBox="-1 -1 7.2 4.7" fill="none" stroke="#333" stroke-width="1.1" stroke-linecap="butt" stroke-linejoin="miter"><path d="M0 0 L2.60 2.70 L5.20 0"/></svg>
<div class="t" style="left:898.1px;top:95px;font-size:12.2px;color:#111;letter-spacing:-0.03px;">6 pt</div>
<div class="abs" style="left:923px;top:95px;width:35px;height:1px;background:#ffc000"></div>
<div class="abs" style="left:923px;top:97px;width:35px;height:7.6px;background:#ffc000"></div>
<div class="abs" style="left:923px;top:106px;width:35px;height:1px;background:#ffc000"></div>
<svg class="abs" style="left:880px;top:114px" width="20" height="20" viewBox="880 114 20 20">
<path d="M891.2 117.2 H882.6 V126.6 H885.2" fill="none" stroke="#2b2b2b" stroke-width="1.2"/>
<path d="M886.4 126.2 L887.4 122.6 L893.6 116.6 Q895.2 115.6 896.4 116.8 Q897.4 118.2 896.2 119.6 L890 125.4 Z" fill="#f4f8fc" stroke="#1e88d6" stroke-width="1.3" stroke-linejoin="round"/>
<path d="M886.2 126.6 L887.2 122.8 L890 125.6 Z" fill="#1e88d6" stroke="#1e88d6" stroke-width="0.6"/>
<rect x="881" y="128" width="16" height="4" fill="#ffc000"/></svg>
<div class="t" style="left:899.8px;top:119px;font-size:12.2px;color:#323130;letter-spacing:-0.20px;">Pen Color</div>
<svg class="abs" style="left:955.0px;top:122.2px" width="7.3" height="4.7" viewBox="-1 -1 7.3 4.7" fill="none" stroke="#444" stroke-width="1.1" stroke-linecap="butt" stroke-linejoin="miter"><path d="M0 0 L2.65 2.70 L5.30 0"/></svg>
<div class="abs" style="left:985px;top:72px;width:27px;height:27px;background:#fafafa;border:1px solid #111"></div>
<div class="abs" style="left:998px;top:72px;width:1px;height:27px;background:#111"></div>
<div class="abs" style="left:985px;top:85px;width:27px;height:1px;background:#111"></div>
<div class="t" style="left:978.8px;top:107px;font-size:12.2px;color:#323130;letter-spacing:-0.38px;">Borders</div>
<svg class="abs" style="left:994.6px;top:126.0px" width="7.6" height="4.8" viewBox="-1 -1 7.6 4.8" fill="none" stroke="#444" stroke-width="1.1" stroke-linecap="butt" stroke-linejoin="miter"><path d="M0 0 L2.80 2.80 L5.60 0"/></svg>
<div class="abs" style="left:1022px;top:67px;width:42px;height:73px;background:#c8c6c4;border:1px solid #a8a6a4"></div>
<svg class="abs" style="left:1027px;top:69px" width="34" height="36" viewBox="1027 69 34 36">
<rect x="1030" y="72" width="26" height="26.4" fill="#fafafa"/>
<path d="M1031 72.5 H1056 M1055.6 73 V98 M1042.6 74 V96 M1031 85.5 H1050" fill="none" stroke="#1a1a1a" stroke-width="1" stroke-dasharray="1 1"/>
<path d="M1029.6 71.8 V98.5 H1056.2" fill="none" stroke="#1565c0" stroke-width="1.2"/>
<path d="M1046.2 94.2 L1056.2 83.6 Q1058.2 81.8 1059 82.6 Q1059.7 83.6 1058.4 85.8 L1049.2 96.8 Z" fill="#fff" stroke="#4a4a4a" stroke-width="0.9"/>
<path d="M1035.6 99.3 Q1039.2 99.6 1040.6 97 Q1042.6 93.8 1046 94.4 Q1049 95.6 1048.4 98.6 Q1046.8 102.2 1042.2 101.9 Q1038.4 101.6 1035.6 99.3 Z" fill="#7ab8ee" stroke="#1565c0" stroke-width="0.9"/></svg>
<div class="t" style="left:1024.7px;top:107px;font-size:12.2px;color:#323130;letter-spacing:-0.40px;">Border</div>
<div class="t" style="left:1023.9px;top:123px;font-size:12.2px;color:#323130;letter-spacing:-0.30px;">Painter</div>
<div class="vsep" style="left:1071px;top:68px;height:89px"></div>
<div id="status"></div>
<div class="t" style="left:7.8px;top:712px;font-size:11.6px;color:#444;letter-spacing:0.11px;">Click and drag to apply formatting to table borders.</div>
<svg class="abs" style="left:1005px;top:708px" width="18" height="17" viewBox="1005 708 18 17" fill="none" stroke="#444" stroke-width="1">
<path d="M1007.5 713 V710.5 H1010 M1018 710.5 H1020.5 V713 M1020.5 720 V722.5 H1018 M1010 722.5 H1007.5 V720"/>
<path d="M1010.5 712.5 H1015 L1017.5 715 V720.5 H1010.5 Z M1015 712.5 V715 H1017.5"/></svg>
<div class="t" style="left:1023.6px;top:712px;font-size:11.6px;color:#444;letter-spacing:-0.30px;">Focus</div>
<svg class="abs" style="left:1077px;top:708px" width="18" height="17" viewBox="1077 708 18 17" fill="none" stroke="#444" stroke-width="1">
<path d="M1085.5 711.5 V722 M1079 710.5 H1084.5 Q1085.5 710.5 1085.5 711.5 Q1085.5 710.5 1086.5 710.5 H1092 V721 H1086.5 Q1085.5 721 1085.5 722 Q1085.5 721 1084.5 721 H1079 Z"/>
<path d="M1080.6 713.5 H1083.8 M1080.6 715.5 H1083.8 M1080.6 717.5 H1083.8 M1087.2 713.5 H1090.4 M1087.2 715.5 H1090.4 M1087.2 717.5 H1090.4" stroke-width="0.9"/></svg>
<div class="abs" style="left:1106.5px;top:707px;width:39.5px;height:18px;background:#c8c6c4"></div>
<svg class="abs" style="left:1118px;top:708px" width="16" height="17" viewBox="1118 708 16 17" fill="none" stroke="#333" stroke-width="1">
<rect x="1120.5" y="710.5" width="11" height="12" fill="#fff"/>
<path d="M1122.4 713.5 H1129.6 M1122.4 715.5 H1129.6 M1122.4 717.5 H1129.6 M1122.4 719.5 H1129.6" stroke-width="0.9"/></svg>
<svg class="abs" style="left:1157px;top:708px" width="18" height="17" viewBox="1157 708 18 17" fill="none" stroke="#444" stroke-width="1">
<path d="M1166 722.5 H1159.5 V710.5 H1170.5 V716"/>
<path d="M1161.4 713.5 H1168.6 M1161.4 715.5 H1166.6 M1161.4 717.5 H1165 M1161.4 719.5 H1164.4" stroke-width="0.9"/>
<circle cx="1169.4" cy="719.6" r="3.3" fill="#f3f2f1"/><path d="M1166.1 719.6 H1172.7 M1169.4 716.3 V722.9" stroke-width="0.8"/></svg>
<div class="abs" style="left:1192.4px;top:716px;width:7.4px;height:1px;background:#444"></div>
<div class="abs" style="left:1205px;top:716px;width:100px;height:1px;background:#6a6a6a"></div>
<div class="abs" style="left:1253px;top:711.5px;width:4.6px;height:11.5px;background:#6a6a6a"></div>
<div class="abs" style="left:1310px;top:716px;width:7.6px;height:1px;background:#444"></div>
<div class="abs" style="left:1313.3px;top:712.6px;width:1px;height:7.6px;background:#444"></div>
<div class="t" style="left:1331.0px;top:712px;font-size:11.6px;color:#444;letter-spacing:-0.80px;">100%</div>
<div id="menu"></div>
<div class="t" style="left:800.4px;top:150px;font-size:12.2px;color:#262626;letter-spacing:-0.27px;font-weight:bold;">Theme Borders</div>
<svg class="abs" style="left:790px;top:180px" width="570" height="160" viewBox="790 180 570 160"><rect x="797" y="185.9" width="60.2" height="1.2" fill="#000000"/><rect x="797" y="219.6" width="60.2" height="2.2" fill="#000000"/><rect x="797" y="252.9" width="60.2" height="1.15" fill="#000000"/><rect x="797" y="254.9" width="60.2" height="1.15" fill="#000000"/><rect x="879" y="185.9" width="60.2" height="1.2" fill="#4472c4"/><rect x="879" y="219.6" width="60.2" height="2.2" fill="#4472c4"/><rect x="879" y="252.9" width="60.2" height="1.15" fill="#4472c4"/><rect x="879" y="254.9" width="60.2" height="1.15" fill="#4472c4"/><rect x="961" y="185.9" width="60.2" height="1.2" fill="#ed7d31"/><rect x="961" y="219.6" width="60.2" height="2.2" fill="#ed7d31"/><rect x="961" y="252.9" width="60.2" height="1.15" fill="#ed7d31"/><rect x="961" y="254.9" width="60.2" height="1.15" fill="#ed7d31"/><rect x="1043" y="185.9" width="60.2" height="1.2" fill="#a5a5a5"/><rect x="1043" y="219.6" width="60.2" height="2.2" fill="#a5a5a5"/><rect x="1043" y="252.9" width="60.2" height="1.15" fill="#a5a5a5"/><rect x="1043" y="254.9" width="60.2" height="1.15" fill="#a5a5a5"/><rect x="1125" y="185.9" width="60.2" height="1.2" fill="#ffc000"/><rect x="1125" y="219.6" width="60.2" height="2.2" fill="#ffc000"/><rect x="1125" y="252.9" width="60.2" height="1.15" fill="#ffc000"/><rect x="1125" y="254.9" width="60.2" height="1.15" fill="#ffc000"/><rect x="1207" y="185.9" width="60.2" height="1.2" fill="#5b9bd5"/><rect x="1207" y="219.6" width="60.2" height="2.2" fill="#5b9bd5"/><rect x="1207" y="252.9" width="60.2" height="1.15" fill="#5b9bd5"/><rect x="1207" y="254.9" width="60.2" height="1.15" fill="#5b9bd5"/><rect x="1289" y="185.9" width="60.2" height="1.2" fill="#70ad47"/><rect x="1289" y="219.6" width="60.2" height="2.2" fill="#70ad47"/><rect x="1289" y="252.9" width="60.2" height="1.15" fill="#70ad47"/><rect x="1289" y="254.9" width="60.2" height="1.15" fill="#70ad47"/></svg>
<div class="abs" style="left:786px;top:281px;width:575px;height:1px;background:#e1dfdd"></div>
<div class="t" style="left:799.6px;top:291px;font-size:12.2px;color:#262626;letter-spacing:-0.32px;font-weight:bold;">Recently Used Borders</div>
<div class="abs" style="left:797px;top:326px;width:60px;height:1.1px;background:#ed7d31"></div>
<div class="abs" style="left:797px;top:328px;width:60px;height:1.1px;background:#ed7d31"></div>
<div class="abs" style="left:879px;top:326.8px;width:60px;height:1.2px;background:#000"></div>
<svg class="abs" style="left:948px;top:309px" width="86" height="38" viewBox="948 309 86 38"><rect x="951.4" y="312.3" width="79" height="31.2" fill="#fff" stroke="#dfddda" stroke-width="2.5"/></svg>
<div class="abs" style="left:961px;top:324px;width:60px;height:1px;background:#ffc000"></div>
<div class="abs" style="left:961px;top:326px;width:60px;height:4px;background:#ffc000"></div>
<div class="abs" style="left:961px;top:331px;width:60px;height:1px;background:#ffc000"></div>
<div class="abs" style="left:786px;top:354px;width:575px;height:1px;background:#e1dfdd"></div>
<svg class="abs" style="left:796px;top:360px" width="20" height="18" viewBox="796 360 20 18" fill="none">
<rect x="798.9" y="361.9" width="13" height="13" fill="#f8f8f8"/>
<path d="M798.5 374.8 V361.5 H812.5 V365.4 M805.5 361.4 V371 M798.4 368.5 H807" stroke="#6a6a6a" stroke-width="1"/>
<path d="M798 375.5 H802.8 M809.4 375.5 H813" stroke="#1e88d6" stroke-width="1.1"/>
<path d="M804.2 376.8 L805.6 373.6 L811.6 367.9 Q812.7 367 813.7 368 Q814.5 369 813.5 370 L807.4 375.6 Z" fill="#3a3a3a"/>
<path d="M806.9 374 L811.6 369.6" stroke="#fff" stroke-width="0.8" stroke-dasharray="0.9 0.6"/>
<path d="M809.4 367.7 L813.3 371.6" stroke="#3a3a3a" stroke-width="1.1"/></svg>
<div class="t" style="left:822.6px;top:364px;font-size:12.2px;color:#323130;letter-spacing:-0.28px;">Border <span style="text-decoration:underline">S</span>ampler</div>
<svg class="abs" style="left:0;top:0" width="1366" height="725" viewBox="0 0 1366 725">
<path d="M632.5 189.6 L846 123.8" stroke="#000" stroke-width="3.2" fill="none"/>
<path d="M855.2 120.8 L837 120 L840.6 123.9 L841.6 127 L842.3 130.5 Z" fill="#000"/>
<path d="M1116.6 525.4 L991.5 344.5" stroke="#000" stroke-width="3.2" fill="none"/>
<path d="M985.7 335.9 L1000.4 346.7 L995.2 348 L992.4 350 L990.6 353.4 Z" fill="#000"/>
<path d="M1017.6 338.4 V354.6 L1021.4 351.1 L1024 356.8 L1026.6 355.7 L1024.2 350.5 L1028.8 350.2 Z" fill="#fff" stroke="#0a0a18" stroke-width="1.1" stroke-linejoin="round"/>
</svg>
<div class="t" style="left:541.7px;top:190px;font-size:22.4px;color:#0a0a0a;transform:scaleX(1.0873);transform-origin:0 0;font-weight:bold;-webkit-text-stroke:0.45px #0a0a0a;">Border styles</div>
<div class="t" style="left:982.9px;top:533px;font-size:22.4px;color:#0a0a0a;transform:scaleX(1.1197);transform-origin:0 0;font-weight:bold;-webkit-text-stroke:0.45px #0a0a0a;">Border theme selected</div>
</body>
</html>
